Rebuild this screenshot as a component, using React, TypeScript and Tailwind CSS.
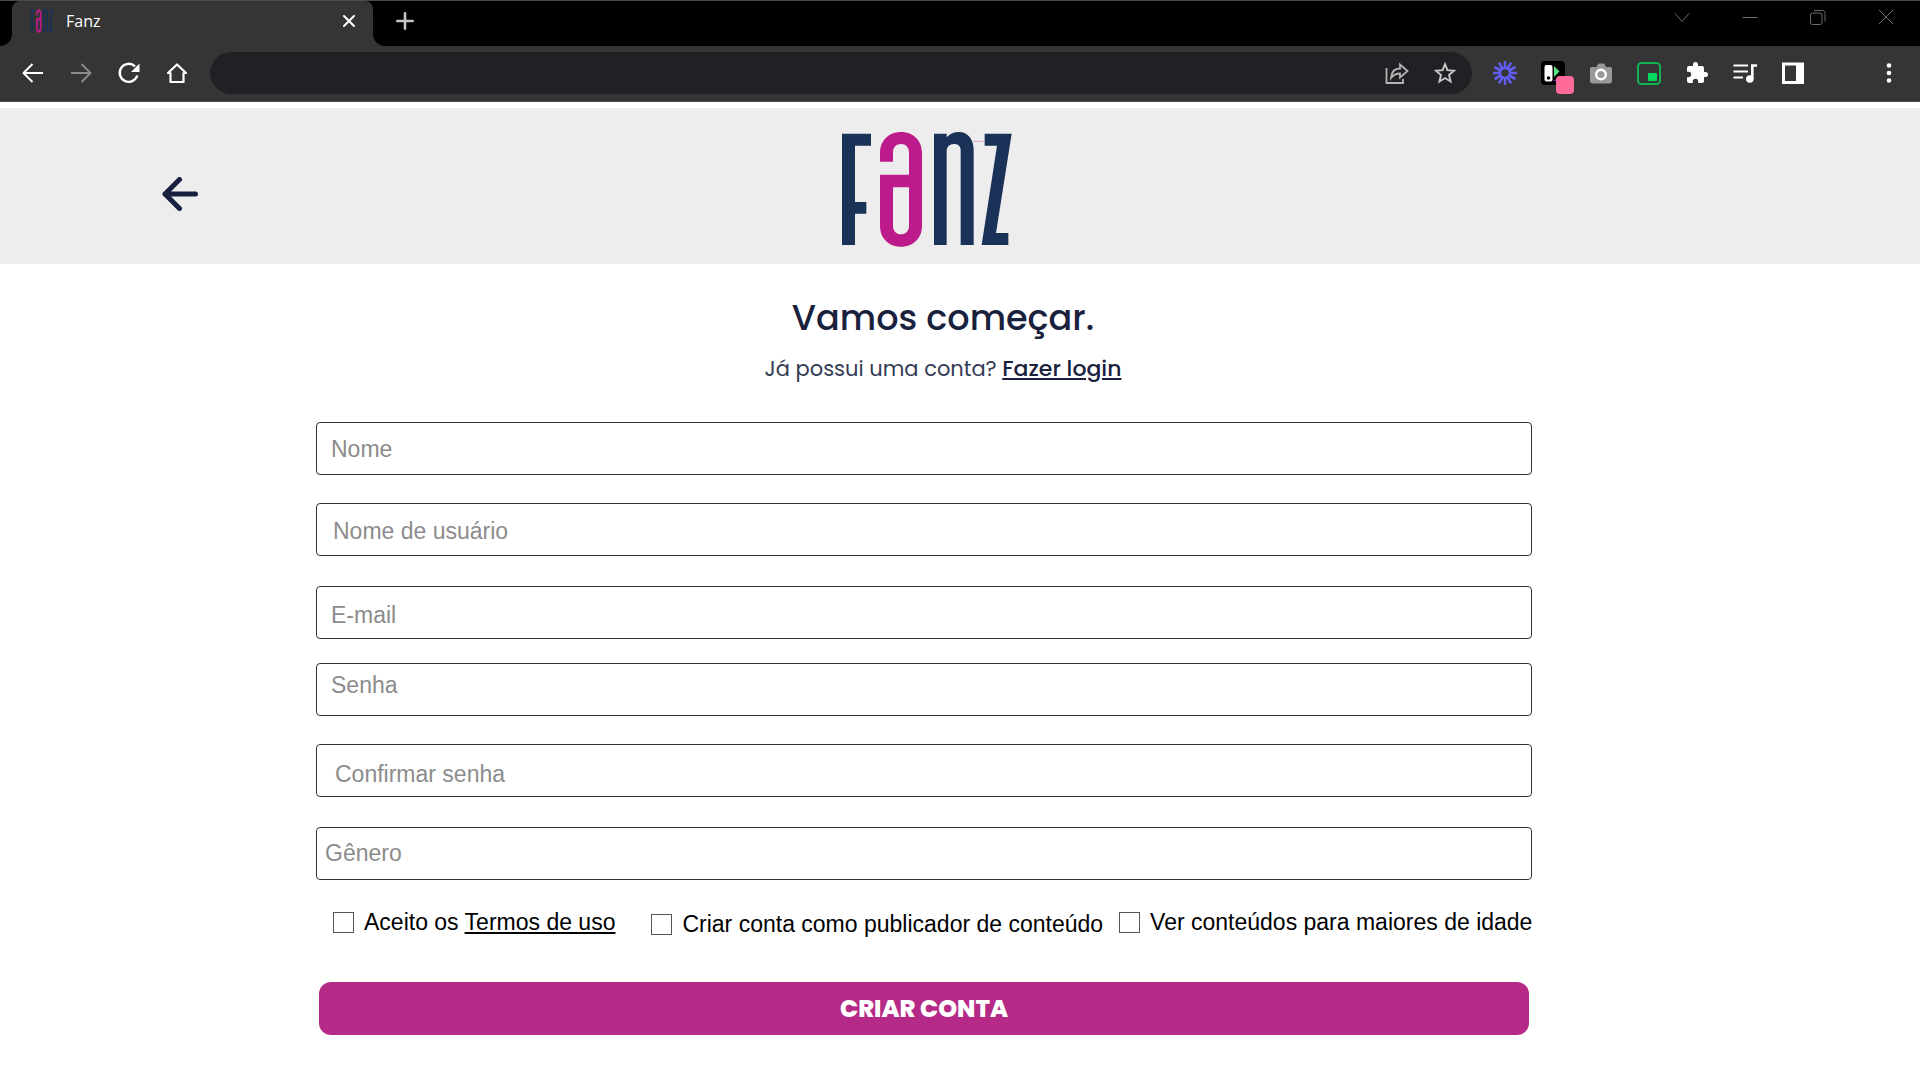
import React, { useState } from 'react';

type Field = {
  id: string;
  label: string;
  type: string;
  className: string;
};

const FIELDS: Field[] = [
  { id: 'nome', label: 'Nome', type: 'text', className: 'pl-3.5 pt-0.5' },
  { id: 'usuario', label: 'Nome de usuário', type: 'text', className: 'mt-7 pl-4 pt-1' },
  { id: 'email', label: 'E-mail', type: 'email', className: 'mt-7.5 pl-3.5 pt-1.5' },
  { id: 'senha', label: 'Senha', type: 'password', className: 'mt-6 pl-3.5 pb-2' },
  { id: 'confirmar', label: 'Confirmar senha', type: 'password', className: 'mt-7 pl-4.5 pt-2' },
  { id: 'genero', label: 'Gênero', type: 'text', className: 'mt-7.5 pl-2' },
];

// The four letters of the wordmark, reused for the tab favicon
const FanzLogo: React.FC<{ className: string; stretch?: boolean }> = ({ className, stretch }) => (
  <svg
    className={className}
    viewBox="60 64 516 351"
    preserveAspectRatio={stretch ? 'none' : 'xMidYMid meet'}
    role="img"
    aria-label="Fanz"
  >
    <g fill="#1a3158">
      <path d="M66 72H153V108H105V277H139V312H105V406H66Z" />
      <path d="M342 72H380V83C390 72 402 67 417 67C444 67 461 90 461 120V406H422V122C422 109 414 103 402 103C388 103 380 112 380 125V406H342Z" />
      <path d="M494 72H575L528 370H565V406H485L531 108H494Z" />
    </g>
    <path
      fill="#bd1b8c"
      fillRule="evenodd"
      d="M180 156V130C180 92 207 67 243 67C279 67 306 92 306 130V348C306 386 279 411 243 411C207 411 180 386 180 348V195H267V128C267 113 257 103 243 103C229 103 219 113 219 128V156ZM219 233V348C219 364 229 374 243 374C257 374 267 364 267 348V233Z"
    />
    <path d="M461 95H494" stroke="#bd1b8c" strokeOpacity="0.35" strokeWidth="3" />
  </svg>
);

const IconButton: React.FC<{ label: string; className?: string; children: React.ReactNode }> = ({
  label,
  className = 'text-white',
  children,
}) => (
  <button
    type="button"
    aria-label={label}
    className={`flex h-10 w-12 shrink-0 items-center justify-center ${className}`}
  >
    <svg className="size-6" viewBox="0 0 24 24" fill="none" stroke="currentColor" strokeWidth="2">
      {children}
    </svg>
  </button>
);

const WindowButton: React.FC<{ label: string; children: React.ReactNode }> = ({ label, children }) => (
  <button
    type="button"
    aria-label={label}
    className="flex h-8 w-[68px] items-center justify-center text-[#6b6b6b]"
  >
    <svg className="size-4" viewBox="0 0 16 16" fill="none" stroke="currentColor" strokeWidth="1">
      {children}
    </svg>
  </button>
);

const TabStrip: React.FC = () => (
  <div className="flex h-[46px] items-start border-t border-[#4a4a4a] bg-black">
    <div className="h-full w-3 bg-[#353535]">
      <div className="h-full rounded-br-xl bg-black" />
    </div>
    <div className="flex h-full w-[361px] items-start rounded-t-lg bg-[#353535] pl-[19px] pr-3">
      <FanzLogo className="mt-2 h-6 w-[22px]" stretch />
      <span className="ml-[13px] mt-2 flex-1 font-['Open_Sans',sans-serif] text-base leading-6 text-white">
        Fanz
      </span>
      <button type="button" aria-label="Fechar guia" className="mt-2 flex size-6 items-center justify-center text-white">
        <svg className="size-3" viewBox="0 0 12 12" stroke="currentColor" strokeWidth="2" strokeLinecap="round">
          <path d="M1 1L11 11M11 1L1 11" />
        </svg>
      </button>
    </div>
    <div className="h-full w-3 bg-[#353535]">
      <div className="h-full rounded-bl-xl bg-black" />
    </div>
    <button type="button" aria-label="Nova guia" className="ml-2 mt-2 flex size-6 items-center justify-center text-[#c4c4c4]">
      <svg className="size-[18px]" viewBox="0 0 18 18" stroke="currentColor" strokeWidth="2.6" strokeLinecap="round">
        <path d="M9 1.3V16.7M1.3 9H16.7" />
      </svg>
    </button>
    <div className="ml-auto flex">
      <WindowButton label="Pesquisar guias">
        <path d="M1 4.5L8 12.5L15 4.5" />
      </WindowButton>
      <WindowButton label="Minimizar">
        <path d="M0.5 8.5H15.5" />
      </WindowButton>
      <WindowButton label="Restaurar">
        <rect x="0.5" y="4" width="11.5" height="11.5" rx="2" />
        <path d="M4 1.5H12C14 1.5 15 2.5 15 4.5V12.5" />
      </WindowButton>
      <WindowButton label="Fechar">
        <path d="M1 1L15 15M15 1L1 15" />
      </WindowButton>
    </div>
  </div>
);

const Toolbar: React.FC = () => (
  <div className="flex h-14 items-center border-b border-[#4d4d4d] bg-[#353535] pb-px pl-[9px] pr-[7px]">
    <IconButton label="Voltar">
      <path d="M22 12H3M11.5 3L2.5 12L11.5 21" strokeLinejoin="round" />
    </IconButton>
    <IconButton label="Avançar" className="text-[#8a8a8a]">
      <path d="M2 12H21M12.5 3L21.5 12L12.5 21" strokeLinejoin="round" />
    </IconButton>
    <IconButton label="Recarregar">
      <path d="M20.3 14.5A9 9 0 1 1 18 5.4" strokeWidth="2.4" />
      <path d="M22.5 2.5V11H14Z" fill="currentColor" stroke="none" />
    </IconButton>
    <IconButton label="Página inicial">
      <path d="M12 3.5L3 12H5.5V21H18.5V12H21Z" strokeWidth="2.2" strokeLinejoin="round" />
    </IconButton>
    <div className="mx-[9px] flex h-[42px] flex-1 items-center rounded-full bg-[#202124] pr-[3px]">
      <input
        type="text"
        aria-label="Barra de endereço"
        className="h-full min-w-0 flex-1 bg-transparent px-5 text-white outline-none"
      />
      <IconButton label="Compartilhar" className="text-[#b4b4b4]">
        <path d="M1.5 7V22H18V18" strokeWidth="1.8" />
        <path d="M6 17C6.5 11 10 7.5 15 7.5V3.5L22.5 10L15 16.5V12.5C11 12.5 8.5 13.8 6 17Z" strokeWidth="1.8" />
      </IconButton>
      <IconButton label="Adicionar aos favoritos" className="text-[#c8c8c8]">
        <path d="M12 3.2L14.4 9.2L21 9.7L16 14L17.6 20.5L12 17L6.4 20.5L8 14L3 9.7L9.6 9.2Z" strokeWidth="1.9" />
      </IconButton>
    </div>
    <IconButton label="Loom" className="text-[#625df5]">
      {[0, 30, 60, 90, 120, 150, 180, 210, 240, 270, 300, 330].map((angle) => (
        <path key={angle} d="M12 0V8" strokeWidth="2.6" transform={`rotate(${angle} 12 12)`} />
      ))}
      <circle cx="12" cy="12" r="5" strokeWidth="2.4" />
    </IconButton>
    <button type="button" aria-label="Extensão de cores" className="relative flex h-10 w-12 shrink-0 items-center justify-center">
      <svg className="size-6" viewBox="0 0 24 24">
        <rect width="24" height="24" rx="4" fill="#000" />
        <rect x="3.5" y="4" width="8" height="16.5" rx="2" fill="#fff" />
        <circle cx="7.5" cy="17" r="1.8" fill="#000" />
        <path d="M13 5L18.5 10.5L13 16Z" fill="#5be584" />
        <path d="M12 20L16 17.5V20Z" fill="#8a1fc4" />
      </svg>
      <span className="absolute -bottom-px right-[3px] size-[18px] rounded-sm bg-[#ff6b98]" />
    </button>
    <IconButton label="Captura de tela" className="text-[#999]">
      <path
        d="M3 6H7.5L8.5 4C9 3 9.5 2.5 10.5 2.5H14C15 2.5 15.5 3 16 4L17 6H21C22.5 6 23 7 23 8V20C23 21.5 22 22.5 20.5 22.5H3.5C2 22.5 1 21.5 1 20V8C1 7 1.5 6 3 6Z"
        fill="currentColor"
        stroke="none"
      />
      <circle cx="12" cy="13.5" r="4.8" stroke="#fff" strokeWidth="2.4" />
    </IconButton>
    <IconButton label="Picture in Picture" className="text-[#10b552]">
      <rect x="1" y="2" width="22" height="21" rx="3.5" />
      <rect x="11" y="12" width="9" height="8" rx="1" fill="#00d95f" stroke="none" />
    </IconButton>
    <IconButton label="Extensões">
      <path
        d="M20.5 11H19V7a2 2 0 0 0-2-2h-4V3.5a2.5 2.5 0 0 0-5 0V5H4a2 2 0 0 0-2 2v3.8h1.5a2.7 2.7 0 0 1 0 5.4H2V20a2 2 0 0 0 2 2h3.8v-1.5a2.7 2.7 0 0 1 5.4 0V22H17a2 2 0 0 0 2-2v-4h1.5a2.5 2.5 0 0 0 0-5Z"
        fill="currentColor"
        stroke="none"
      />
    </IconButton>
    <IconButton label="Controle de mídia">
      <path d="M0.5 4.5H15M0.5 10.5H15M0.5 16.5H10" strokeWidth="2.2" />
      <path d="M19.3 18V4.5H24" strokeWidth="2.6" />
      <circle cx="16.8" cy="18" r="3.8" fill="currentColor" stroke="none" />
    </IconButton>
    <IconButton label="Painel lateral">
      <rect x="2.5" y="3" width="19" height="18.5" strokeWidth="3" />
      <rect x="15" y="3" width="7" height="18.5" fill="currentColor" stroke="none" />
    </IconButton>
    <IconButton label="Menu" className="ml-12 text-white">
      <g fill="currentColor" stroke="none">
        <circle cx="12" cy="4.5" r="2.3" />
        <circle cx="12" cy="12" r="2.3" />
        <circle cx="12" cy="19.5" r="2.3" />
      </g>
    </IconButton>
  </div>
);

const CheckOption: React.FC<{ id: string; className?: string; children: React.ReactNode }> = ({
  id,
  className = '',
  children,
}) => (
  <div className={`flex items-center gap-2.5 ${className}`}>
    <input
      id={id}
      type="checkbox"
      className="size-[21px] shrink-0 appearance-none border border-[#555] bg-white checked:bg-[#b52a86]"
    />
    <label htmlFor={id} className="whitespace-nowrap">
      {children}
    </label>
  </div>
);

export default function App() {
  const [values, setValues] = useState<Record<string, string>>({});

  return (
    <div className="min-h-screen bg-white font-['Liberation_Sans',Arial,sans-serif]">
      <TabStrip />
      <Toolbar />

      <header className="mt-1.5 grid grid-cols-[1fr_auto_1fr] items-center bg-[#ededed] pb-4 pl-[158px] pr-[226px] pt-[23px]">
        <button type="button" aria-label="Voltar para a página anterior" className="mt-2 flex size-11 items-center justify-center">
          <svg
            className="h-[34px] w-9"
            viewBox="0 0 36 34"
            fill="none"
            stroke="#17203f"
            strokeWidth="5"
            strokeLinecap="round"
            strokeLinejoin="round"
          >
            <path d="M33.5 17H3M17.5 2.5L3 17L17.5 31.5" />
          </svg>
        </button>
        <FanzLogo className="h-[117px] w-[172px]" />
      </header>

      <main className="pl-[316px] pr-[388px]">
        <div className="pl-[38px] pt-[30px] text-center font-['Poppins','Inter',sans-serif] text-[#19213d]">
          <h1 className="text-[35px] font-medium leading-[48px]">Vamos começar.</h1>
          <p className="mt-[11px] text-[21px] leading-8 text-[#343b54]">
            Já possui uma conta?{' '}
            <a href="#login" className="text-[22px] font-medium text-[#19213d] underline underline-offset-2">
              Fazer login
            </a>
          </p>
        </div>

        <form className="mt-[37px] flex flex-col" onSubmit={(e) => e.preventDefault()}>
          {FIELDS.map((field) => (
            <input
              key={field.id}
              id={field.id}
              type={field.type}
              aria-label={field.label}
              placeholder={field.label}
              value={values[field.id] ?? ''}
              onChange={(e) => setValues({ ...values, [field.id]: e.target.value })}
              className={`h-[53px] w-full rounded border border-[#333] bg-white pr-3 text-[23px] text-black outline-none placeholder:text-[#8c8c8c] ${field.className}`}
            />
          ))}

          <div className="mt-6 flex items-center pl-[17px] text-[23px] leading-8 text-black">
            <CheckOption id="termos">
              Aceito os{' '}
              <a href="#termos" className="underline underline-offset-2">
                Termos de uso
              </a>
            </CheckOption>
            <CheckOption id="publicador" className="ml-9 pt-1">
              Criar conta como publicador de conteúdo
            </CheckOption>
            <CheckOption id="maiores" className="ml-4">
              Ver conteúdos para maiores de idade
            </CheckOption>
          </div>

          <button
            type="submit"
            className="mx-[3px] mt-10.5 h-[53px] rounded-xl bg-[#b52a86] font-['Poppins','Inter',sans-serif] text-2xl font-extrabold text-white"
          >
            CRIAR CONTA
          </button>
        </form>
      </main>
    </div>
  );
}
